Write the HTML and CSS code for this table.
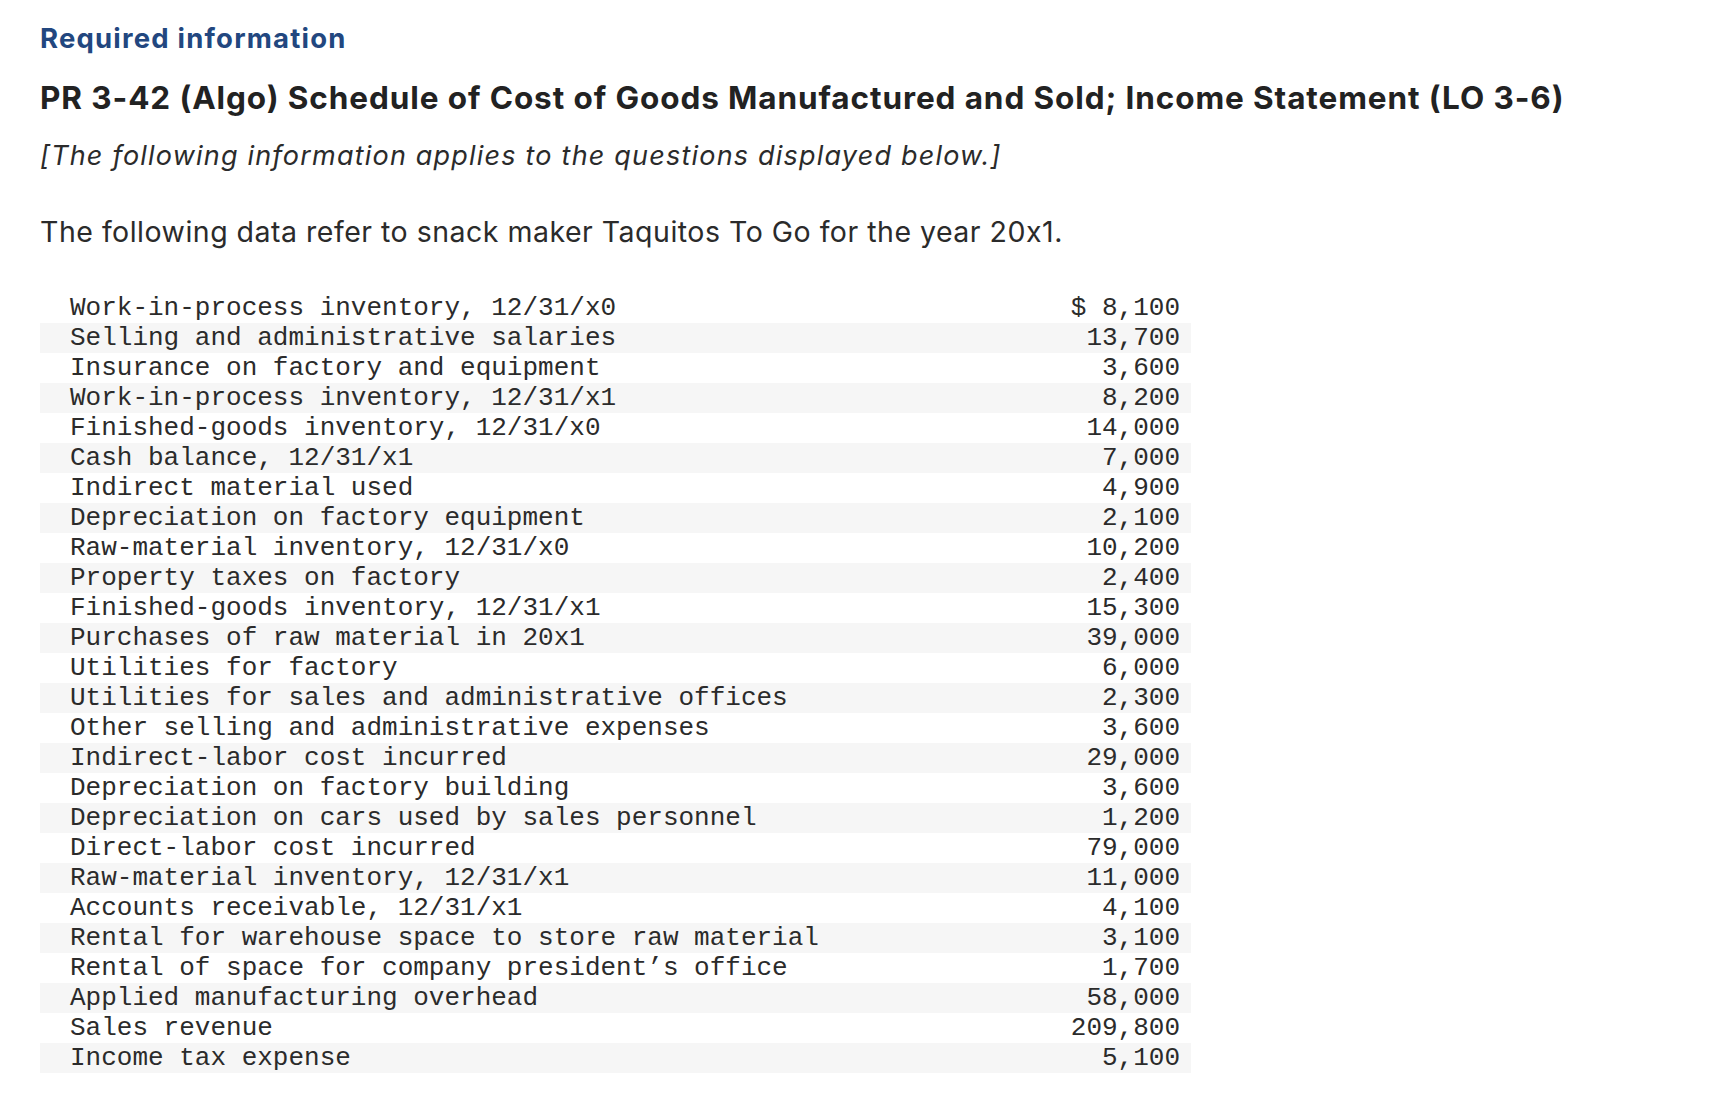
FILE: index.html
```html
<!DOCTYPE html>
<html lang="en">
<head>
<meta charset="utf-8">
<title>Required information</title>
<link rel="stylesheet" href="styles.css">
</head>
<body>
<main class="page">
  <h2 class="req">Required information</h2>
  <h1 class="title">PR 3-42 (Algo) Schedule of Cost of Goods Manufactured and Sold; Income Statement (LO 3-6)</h1>
  <p class="note">[The following information applies to the questions displayed below.]</p>
  <p class="intro">The following data refer to snack maker Taquitos To Go for the year 20x1.</p>
  <table class="data">
    <tbody>
      <tr><td class="lbl">Work-in-process inventory, 12/31/x0</td><td class="amt">$ 8,100</td></tr>
      <tr><td class="lbl">Selling and administrative salaries</td><td class="amt">13,700</td></tr>
      <tr><td class="lbl">Insurance on factory and equipment</td><td class="amt">3,600</td></tr>
      <tr><td class="lbl">Work-in-process inventory, 12/31/x1</td><td class="amt">8,200</td></tr>
      <tr><td class="lbl">Finished-goods inventory, 12/31/x0</td><td class="amt">14,000</td></tr>
      <tr><td class="lbl">Cash balance, 12/31/x1</td><td class="amt">7,000</td></tr>
      <tr><td class="lbl">Indirect material used</td><td class="amt">4,900</td></tr>
      <tr><td class="lbl">Depreciation on factory equipment</td><td class="amt">2,100</td></tr>
      <tr><td class="lbl">Raw-material inventory, 12/31/x0</td><td class="amt">10,200</td></tr>
      <tr><td class="lbl">Property taxes on factory</td><td class="amt">2,400</td></tr>
      <tr><td class="lbl">Finished-goods inventory, 12/31/x1</td><td class="amt">15,300</td></tr>
      <tr><td class="lbl">Purchases of raw material in 20x1</td><td class="amt">39,000</td></tr>
      <tr><td class="lbl">Utilities for factory</td><td class="amt">6,000</td></tr>
      <tr><td class="lbl">Utilities for sales and administrative offices</td><td class="amt">2,300</td></tr>
      <tr><td class="lbl">Other selling and administrative expenses</td><td class="amt">3,600</td></tr>
      <tr><td class="lbl">Indirect-labor cost incurred</td><td class="amt">29,000</td></tr>
      <tr><td class="lbl">Depreciation on factory building</td><td class="amt">3,600</td></tr>
      <tr><td class="lbl">Depreciation on cars used by sales personnel</td><td class="amt">1,200</td></tr>
      <tr><td class="lbl">Direct-labor cost incurred</td><td class="amt">79,000</td></tr>
      <tr><td class="lbl">Raw-material inventory, 12/31/x1</td><td class="amt">11,000</td></tr>
      <tr><td class="lbl">Accounts receivable, 12/31/x1</td><td class="amt">4,100</td></tr>
      <tr><td class="lbl">Rental for warehouse space to store raw material</td><td class="amt">3,100</td></tr>
      <tr><td class="lbl">Rental of space for company president’s office</td><td class="amt">1,700</td></tr>
      <tr><td class="lbl">Applied manufacturing overhead</td><td class="amt">58,000</td></tr>
      <tr><td class="lbl">Sales revenue</td><td class="amt">209,800</td></tr>
      <tr><td class="lbl">Income tax expense</td><td class="amt">5,100</td></tr>
    </tbody>
  </table>
</main>
</body>
</html>
```

FILE: styles.css
```css
html, body {
  margin: 0;
  padding: 0;
  background: #ffffff;
}

.page {
  padding: 22px 0 40px 40px;
  font-family: "Inter", "Lato", sans-serif;
  font-feature-settings: "calt" 0;
  color: #2b2b2b;
}

.req {
  margin: 0;
  font-size: 27.5px;
  line-height: 32px;
  font-weight: 700;
  letter-spacing: 1.2px;
  color: #22477f;
}

.title {
  margin: 24px 0 0 0;
  font-size: 31.5px;
  line-height: 40px;
  font-weight: 700;
  letter-spacing: 0.9px;
  color: #222222;
}

.note {
  margin: 21px 0 0 0;
  font-size: 27px;
  line-height: 34px;
  font-style: italic;
  letter-spacing: 1.2px;
  color: #2b2b2b;
}

.intro {
  margin: 41px 0 0 0;
  font-size: 28.5px;
  line-height: 36px;
  letter-spacing: 0.5px;
  color: #2b2b2b;
}

.data {
  margin-top: 43px;
  width: 1151px;
  border-collapse: collapse;
  font-family: "Liberation Mono", "Courier New", monospace;
  font-size: 26px;
  color: #2b2b2b;
}

.data td {
  padding: 0;
  height: 30px;
  line-height: 30px;
  white-space: pre;
}

.data tr:nth-child(even) {
  background: #f6f6f6;
}

.data .lbl {
  padding-left: 30px;
  text-align: left;
}

.data .amt {
  padding-right: 11px;
  text-align: right;
}
```
